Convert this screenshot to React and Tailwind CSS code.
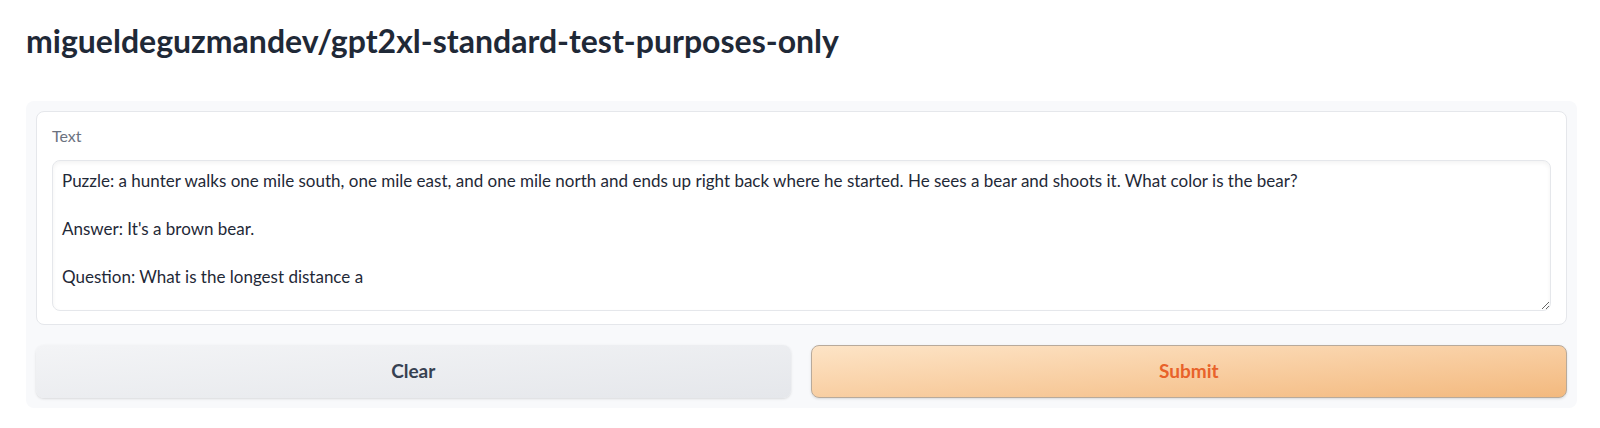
import React from "react";

const prompt =
  "Puzzle: a hunter walks one mile south, one mile east, and one mile north and ends up right back where he started. He sees a bear and shoots it. What color is the bear?\n\nAnswer: It's a brown bear.\n\nQuestion: What is the longest distance a";

const App = () => {
  return (
    <div
      className="min-h-screen bg-white pl-[26px] pr-[23px] pt-[20px]"
      style={{ fontFamily: "Lato, 'Open Sans', sans-serif" }}
    >
      <h1 className="text-[32px] font-bold leading-[42px] text-[#1f2937]">
        migueldeguzmandev/gpt2xl-standard-test-purposes-only
      </h1>

      {/* Interface panel */}
      <div className="mt-[39px] flex flex-col gap-5 rounded-lg bg-[#f8f9fb] p-[10px]">
        <div className="rounded-lg border border-[#e5e7eb] bg-white px-[15px] pt-[14px] pb-[13px]">
          <label className="block text-[16px] leading-[20px] text-[#6b7280]">
            Text
          </label>
          <textarea
            readOnly
            defaultValue={prompt}
            className="mt-[14px] block h-[151px] w-full rounded-lg border border-[#e5e7eb] bg-white px-[9px] py-[8px] text-[17px] leading-[24px] text-[#1f2937] shadow-inner outline-none"
          />
        </div>

        <div className="flex gap-5">
          <button className="h-[53px] flex-1 rounded-lg bg-gradient-to-br from-[#f3f4f6] to-[#e5e7eb] text-[19px] font-bold text-[#374151] shadow-sm">
            Clear
          </button>
          <button className="h-[53px] flex-1 rounded-lg border border-[#b8aa9b] bg-gradient-to-br from-[#fde4c6] to-[#f3b97e] text-[19px] font-bold text-[#e8622a] shadow-sm">
            Submit
          </button>
        </div>
      </div>
    </div>
  );
};

export default App;
